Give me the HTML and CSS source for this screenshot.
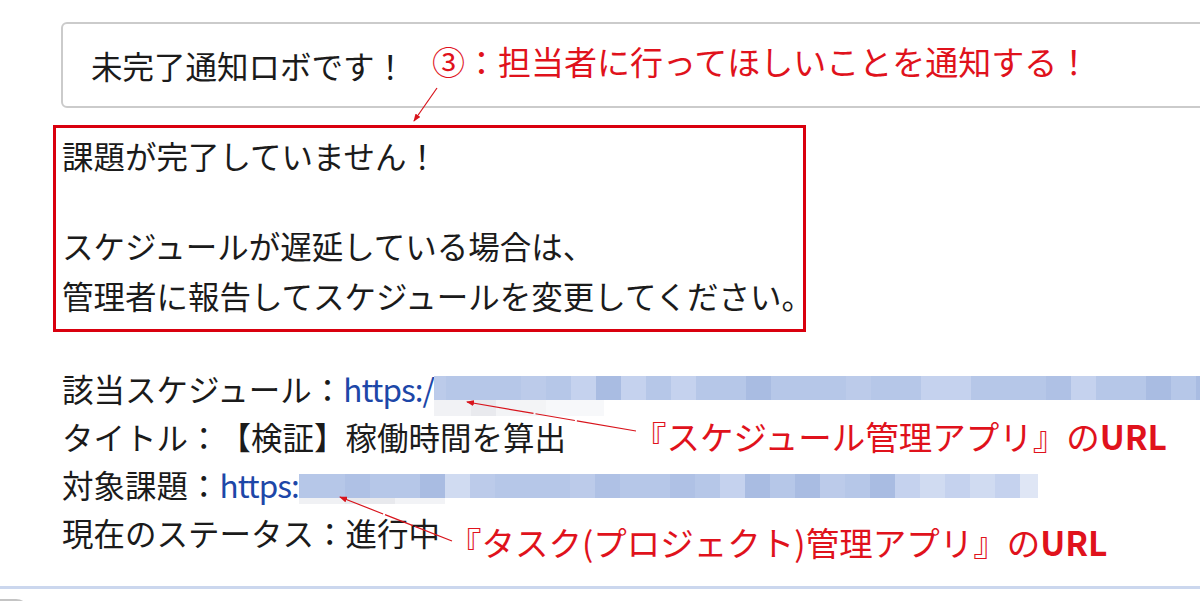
FILE: index.html
```html
<!DOCTYPE html>
<html lang="ja">
<head>
    <meta charset="UTF-8">
    <meta name="viewport" content="width=device-width, initial-scale=1.0">
    <title>未完了通知ロボ</title>
    <link rel="stylesheet" href="styles.css">
</head>
<body>

<div class="page">
    <div class="robot-bar">
        <span class="robot-name">未完了通知ロボです！</span>
        <span class="note note-top">③：担当者に行ってほしいことを通知する！</span>
    </div>

    <div class="message-box">
        <p class="lead">課題が完了していません！</p>
        <p class="body">スケジュールが遅延している場合は、<br>管理者に報告してスケジュールを変更してください。</p>
    </div>

    <div class="details">
        <div class="row">該当スケジュール：<a class="link">https:/</a><span class="mosaic mosaic-schedule">
            <span class="px first ml"></span><span class="px m"></span><span class="px m"></span><span class="px m"></span><span class="px ml"></span><span class="px m"></span><span class="px l"></span><span class="px d"></span><span class="px l"></span><span class="px m"></span><span class="px l"></span><span class="px m"></span><span class="px m"></span><span class="px d"></span><span class="px m"></span><span class="px m"></span><span class="px m"></span><span class="px ml"></span><span class="px m"></span><span class="px m"></span><span class="px l"></span><span class="px l"></span><span class="px m"></span><span class="px m"></span><span class="px m"></span><span class="px md"></span><span class="px l"></span><span class="px m"></span><span class="px m"></span><span class="px d"></span><span class="px m"></span><span class="px d"></span><span class="px m"></span>
        </span></div>
        <div class="row">タイトル：【検証】稼働時間を算出<span class="note note-url">『スケジュール管理アプリ』の<b>URL</b></span></div>
        <div class="row">対象課題：<a class="link">https:</a><span class="mosaic mosaic-task">
            <span class="px first2 m"></span><span class="px m"></span><span class="px md"></span><span class="px m"></span><span class="px m"></span><span class="px d"></span><span class="px vl"></span><span class="px ml"></span><span class="px m"></span><span class="px m"></span><span class="px m"></span><span class="px ml"></span><span class="px md"></span><span class="px m"></span><span class="px m"></span><span class="px md"></span><span class="px m"></span><span class="px l"></span><span class="px d"></span><span class="px m"></span><span class="px d"></span><span class="px ml"></span><span class="px m"></span><span class="px d"></span><span class="px l"></span><span class="px vl"></span><span class="px l"></span><span class="px vl"></span><span class="px l"></span><span class="px last vvl"></span>
        </span></div>
        <div class="row">現在のステータス：進行中<span class="note note-url2">『タスク(プロジェクト)管理アプリ』の<b>URL</b></span></div>
    </div>

    <div class="composer"></div>

    <!-- annotation arrows -->
    <svg class="arrows" width="1200" height="601" viewBox="0 0 1200 601">
        <defs>
            <marker id="head" markerWidth="8" markerHeight="6" refX="7" refY="3" orient="auto" markerUnits="userSpaceOnUse">
                <path d="M0,0 L8,3 L0,6 Z" fill="#d8141c"/>
            </marker>
        </defs>
        <line x1="437" y1="88" x2="414" y2="121" stroke="#d8141c" stroke-width="1.2" marker-end="url(#head)"/>
        <line x1="636" y1="431" x2="467" y2="402" stroke="#d8141c" stroke-width="1.2" stroke-dasharray="60 2 40 2 80" marker-end="url(#head)"/>
        <line x1="452" y1="541" x2="340" y2="497" stroke="#d8141c" stroke-width="1.2" stroke-dasharray="40 2 30 2 90" marker-end="url(#head)"/>
    </svg>
</div>

</body>
</html>
```

FILE: styles.css
```css
body {
    margin: 0;
    background: #fff;
    font-family: "Noto Sans CJK JP", "Noto Sans", sans-serif;
    color: #1b1b1b;
    overflow: hidden;
    text-spacing-trim: space-all;
}
.page {
    position: relative;
    width: 1200px;
    height: 601px;
    overflow: hidden;
}
.robot-bar {
    display: flex;
    align-items: center;
    margin: 22px -20px 0 61px;
    height: 86px;
    box-sizing: border-box;
    padding-left: 28px;
    border: 2px solid #cbcbcb;
    border-radius: 6px;
    font-size: 31.5px;
    white-space: nowrap;
}
.note {
    color: #e0121c;
}
.note-top {
    margin-left: 26px;
    font-size: 33px;
    margin-top: -8px;
}
.message-box {
    width: 753px;
    box-sizing: border-box;
    margin: 17px 0 0 53px;
    padding: 5px 0 9px 6px;
    border: 3px solid #d9000e;
    font-size: 31.5px;
    white-space: nowrap;
}
.message-box p {
    margin: 0;
}
.lead {
    line-height: 44px;
}
.body {
    margin-top: 43px !important;
    line-height: 50px;
}
.details {
    margin: 32px 0 0 62px;
    font-size: 31.5px;
    line-height: 48px;
    white-space: nowrap;
}
.link {
    color: #1d47a8;
    letter-spacing: -1px;
}
.mosaic {
    display: inline-flex;
    vertical-align: top;
    margin-top: 12px;
    height: 24px;
    position: relative;
}
.mosaic-task {
    margin-top: 14px;
}
.px {
    width: 25px;
    height: 24px;
    flex: none;
}
.px.first {
    width: 12px;
}
.px.first2 {
    width: 21px;
}
.px.last {
    width: 18px;
}
.px.d { background: #a9bce2; }
.px.md { background: #afc1e5; }
.px.m { background: #b6c7e8; }
.px.ml { background: #bccbea; }
.px.l { background: #c5d2ee; }
.px.vl { background: #d0dbf1; }
.px.vvl { background: #dfe6f5; }
.mosaic-schedule::after {
    content: "";
    position: absolute;
    top: 24px;
    left: 0;
    width: 170px;
    height: 16px;
    background: linear-gradient(90deg, #f1f2f5 0 37px, #e9eaee 37px 62px, #f3f4f6 62px 112px, #f7f8fa 112px);
}
.mosaic-task::after {
    content: "";
    position: absolute;
    top: 24px;
    left: 0;
    width: 146px;
    height: 6px;
    background: linear-gradient(90deg, #f0f1f4 0 46px, #e8e9ed 46px 96px, #f2f3f6 96px);
}
.note-url {
    margin-left: 67px;
    font-size: 33.5px;
}
.note-url2 {
    margin-left: 8px;
    font-size: 33.5px;
    vertical-align: -10px;
}
.note b {
    font-weight: 700;
}
.composer {
    margin-top: 20px;
    border-top: 3px solid #cbd7ee;
    height: 10px;
}
.composer::after {
    content: "";
    display: block;
    margin: 10px 0 0 -14px;
    width: 40px;
    height: 40px;
    border: 2px solid #c4c4c4;
    border-radius: 14px;
}
.arrows {
    position: absolute;
    top: 0;
    left: 0;
    pointer-events: none;
}
```
